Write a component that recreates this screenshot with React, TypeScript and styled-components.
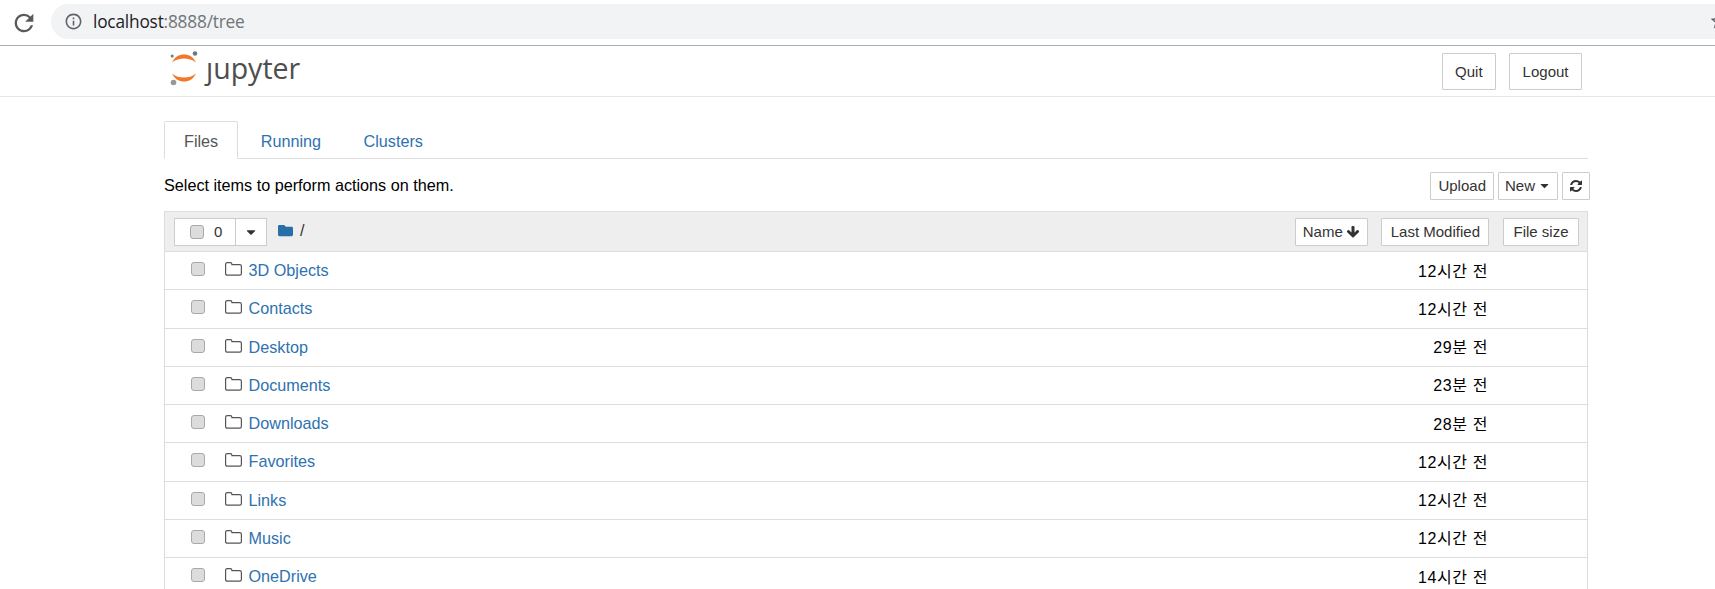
import {createGlobalStyle} from 'styled-components';
import styled from 'styled-components';
import {FaCaretDown, FaFolder} from 'react-icons/fa';
import {MdInfoOutline, MdRefresh, MdStarBorder} from 'react-icons/md';

const GlobalStyle = createGlobalStyle`
  html, body {
    margin: 0;
    padding: 0;
    height: 589px;
    overflow: hidden;
    background: #fff;
    font-family: "Liberation Sans", "Noto Sans CJK KR", Arial, sans-serif;
    font-size: 16.2px;
    color: #000;
  }
`;

const BrowserBar = styled.div`
  display: flex;
  align-items: center;
  height: 45px;
  border-bottom: 1px solid #aeaeae;
  overflow: hidden;
`;

const ReloadIcon = styled(MdRefresh)`
  width: 28px;
  height: 28px;
  margin: 0 13px 0 10px;
  color: #5a5a5a;
  flex: none;
`;

const AddressBar = styled.div`
  flex: none;
  width: 1678px;
  height: 35px;
  margin-top: -3px;
  border-radius: 18px 0 0 18px;
  background: #f1f3f4;
  display: flex;
  align-items: center;
  padding-left: 13px;
  box-sizing: border-box;
  font-size: 17.3px;
  font-family: "Open Sans", "Liberation Sans", sans-serif;
  letter-spacing: -0.2px;
  color: #202124;
  & > span {
    color: #70757a;
  }
`;

const InfoIcon = styled(MdInfoOutline)`
  width: 19px;
  height: 19px;
  margin-right: 10px;
  color: #5f6368;
`;

const StarIcon = styled(MdStarBorder)`
  width: 20px;
  height: 20px;
  margin-left: auto;
  color: #5f6368;
  flex: none;
`;

const Header = styled.div`
  display: flex;
  align-items: center;
  justify-content: space-between;
  height: 50px;
  padding: 0 133px 0 169px;
  border-bottom: 1px solid #e7e7e7;
`;

const Logo = styled.div`
  display: flex;
  align-items: center;
  gap: 7px;
  font-family: "Open Sans", "Noto Sans", sans-serif;
  font-size: 28.5px;
  line-height: 1;
  color: #4e4e4e;
  padding-bottom: 6px;
`;

const HeaderActions = styled.div`
  display: flex;
  gap: 13px;
`;

const HeaderButton = styled.button`
  height: 37px;
  padding: 0 12.5px;
  background: #fff;
  border: 1px solid #ccc;
  border-radius: 1px;
  font: inherit;
  font-size: 15px;
  color: #333;
`;

const Main = styled.div`
  width: 1424px;
  margin-left: 164px;
`;

const Tabs = styled.div`
  display: flex;
  gap: 2.5px;
  height: 62px;
  box-sizing: border-box;
  padding-top: 24px;
  border-bottom: 1px solid #ddd;
`;

const Tab = styled.div<{$active?: boolean}>`
  height: 38px;
  box-sizing: border-box;
  padding: 0 19px;
  line-height: 39px;
  color: ${(props) => (props.$active ? '#555' : '#2f72b0')};
  border: 1px solid ${(props) => (props.$active ? '#ddd' : 'transparent')};
  border-bottom-color: ${(props) => (props.$active ? '#fff' : 'transparent')};
  border-radius: 2px 2px 0 0;
  background: ${(props) => (props.$active ? '#fff' : 'transparent')};
`;

const Toolbar = styled.div`
  display: flex;
  align-items: center;
  justify-content: space-between;
  height: 51px;
  margin-right: -2px;
  padding-top: 1px;
`;

const ToolbarActions = styled.div`
  display: flex;
  align-items: center;
  gap: 4px;
`;

const SmallButton = styled.button<{$pad?: number}>`
  display: inline-flex;
  align-items: center;
  justify-content: center;
  gap: 3px;
  box-sizing: border-box;
  height: 28px;
  padding: 0 ${(props) => props.$pad ?? 7}px;
  background: #fff;
  border: 1px solid #ccc;
  border-radius: 1px;
  font: inherit;
  font-size: 15px;
  color: #333;
  & > svg {
    flex: none;
  }
`;

const List = styled.div`
  border: 1px solid #ddd;
  border-bottom: none;
`;

const ListHeader = styled.div`
  display: flex;
  align-items: center;
  height: 39px;
  padding: 0 8px 0 9px;
  background: #eee;
  border-bottom: 1px solid #ddd;
`;

const SelectGroup = styled.div`
  display: flex;
  height: 28px;
`;

const SelectCount = styled.div`
  display: flex;
  align-items: center;
  gap: 10px;
  box-sizing: border-box;
  width: 62px;
  padding-left: 15px;
  background: #fff;
  border: 1px solid #ccc;
  font-size: 15px;
  color: #333;
`;

const SelectCaret = styled.div`
  display: flex;
  align-items: center;
  justify-content: center;
  box-sizing: border-box;
  width: 32px;
  margin-left: -1px;
  background: #fff;
  border: 1px solid #ccc;
  color: #333;
`;

const PathBar = styled.div`
  flex: 1;
  display: flex;
  align-items: center;
  gap: 7px;
  margin-left: 11px;
  padding-bottom: 3px;
  color: #333;
`;

const SortButtons = styled.div`
  display: flex;
  gap: 13.5px;
`;

const Checkbox = styled.span`
  display: block;
  flex: none;
  box-sizing: border-box;
  width: 14px;
  height: 14px;
  background: #dcdcdc;
  border: 1px solid #a9a9a9;
  border-radius: 3px;
`;

const RowCheckbox = styled(Checkbox)`
  margin-top: -3px;
`;

const Row = styled.div`
  display: flex;
  align-items: center;
  height: 38.25px;
  box-sizing: border-box;
  padding: 0 99px 0 26px;
  border-bottom: 1px solid #ddd;
`;

const FolderIcon = styled.svg`
  flex: none;
  width: 17px;
  height: 14px;
  margin: -3px 7px 0 19.5px;
`;

const FileLink = styled.a`
  flex: 1;
  color: #2f72b0;
  text-decoration: none;
`;

const Modified = styled.span`
  white-space: nowrap;
  font-size: 16px;
  letter-spacing: 0.6px;
  margin-top: -2px;
`;

const LogoMark = () => (
  <svg width="30" height="36" viewBox="0 0 30 36">
    <path d="M3 12.5C6 6.5 10 4.5 15 4.5s9 2 12 8C23 9.5 19.5 8.5 15 8.5S7 9.5 3 12.5Z" fill="#f37726" />
    <path d="M3 23.5C6 29.5 10 31.5 15 31.5s9-2 12-8C23 26.5 19.5 27.5 15 27.5S7 26.5 3 23.5Z" fill="#f37726" />
    <circle cx="26" cy="3.5" r="2.3" fill="#767677" />
    <circle cx="3.2" cy="6" r="1.5" fill="#767677" />
    <circle cx="4.5" cy="32.5" r="2.8" fill="#989798" />
  </svg>
);

const OpenFolder = () => (
  <FolderIcon viewBox="0 0 17 14">
    <path
      d="M.6 11.5V2.3C.6 1.3 1.3.6 2.3.6h2.9c1 0 1.7.7 1.7 1.7v.4h7.800c1 0 1.700.7 1.700 1.700v7.100c0 1-.7 1.700-1.700 1.700H2.300c-1 0-1.700-.7-1.700-1.700Z"
      fill="none"
      stroke="#555"
      strokeWidth="1.2"
    />
  </FolderIcon>
);

// font awesome 4 glyphs, the ones in react-icons are thinner
const RefreshIcon = () => (
  <svg width="14" height="14" viewBox="0 0 1792 1792" fill="#333">
    <path d="M1639 1056q0 5-1 7-64 268-268 434.500t-478 166.500q-146 0-282.500-55t-243.500-157l-129 129q-19 19-45 19t-45-19-19-45v-448q0-26 19-45t45-19h448q26 0 45 19t19 45-19 45l-137 137q71 66 161 102t187 36q134 0 250-65t186-179q11-17 53-117 8-23 30-23h192q13 0 22.500 9.500t9.500 22.500zm25-800v448q0 26-19 45t-45 19h-448q-26 0-45-19t-19-45 19-45l138-138q-148-137-349-137-134 0-250 65t-186 179q-11 17-53 117-8 23-30 23h-199q-13 0-22.500-9.500t-9.500-22.500v-7q65-268 270-434.500t480-166.500q146 0 284 55.500t245 156.500l130-129q19-19 45-19t45 19 19 45z" />
  </svg>
);

const ArrowDownIcon = () => (
  <svg width="14" height="14" viewBox="0 0 1792 1792" fill="#333">
    <path d="M1675 832q0 53-37 90l-651 652q-39 37-91 37-53 0-90-37l-651-652q-38-36-38-90 0-53 38-91l74-75q39-37 91-37 53 0 90 37l294 294v-704q0-52 38-90t90-38h128q52 0 90 38t38 90v704l294-294q37-37 90-37 52 0 91 37l75 75q37 39 37 91z" />
  </svg>
);

const files = [
  {name: '3D Objects', modified: '12시간 전'},
  {name: 'Contacts', modified: '12시간 전'},
  {name: 'Desktop', modified: '29분 전'},
  {name: 'Documents', modified: '23분 전'},
  {name: 'Downloads', modified: '28분 전'},
  {name: 'Favorites', modified: '12시간 전'},
  {name: 'Links', modified: '12시간 전'},
  {name: 'Music', modified: '12시간 전'},
  {name: 'OneDrive', modified: '14시간 전'},
];

export default function App() {
  return (
    <>
      <GlobalStyle />
      <BrowserBar>
        <ReloadIcon />
        <AddressBar>
          <InfoIcon />
          localhost<span>:8888/tree</span>
          <StarIcon />
        </AddressBar>
      </BrowserBar>
      <Header>
        <Logo>
          <LogoMark />
          ȷupyter
        </Logo>
        <HeaderActions>
          <HeaderButton>Quit</HeaderButton>
          <HeaderButton>Logout</HeaderButton>
        </HeaderActions>
      </Header>
      <Main>
        <Tabs>
          <Tab $active>Files</Tab>
          <Tab>Running</Tab>
          <Tab>Clusters</Tab>
        </Tabs>
        <Toolbar>
          <span>Select items to perform actions on them.</span>
          <ToolbarActions>
            <SmallButton>Upload</SmallButton>
            <SmallButton $pad={6}>
              New <FaCaretDown size={13} />
            </SmallButton>
            <SmallButton $pad={6}>
              <RefreshIcon />
            </SmallButton>
          </ToolbarActions>
        </Toolbar>
        <List>
          <ListHeader>
            <SelectGroup>
              <SelectCount>
                <Checkbox />0
              </SelectCount>
              <SelectCaret>
                <FaCaretDown size={14} />
              </SelectCaret>
            </SelectGroup>
            <PathBar>
              <FaFolder size={15} color="#286ea8" />/
            </PathBar>
            <SortButtons>
              <SmallButton>
                Name <ArrowDownIcon />
              </SmallButton>
              <SmallButton $pad={8.5}>Last Modified</SmallButton>
              <SmallButton $pad={9.5}>File size</SmallButton>
            </SortButtons>
          </ListHeader>
          {files.map((file) => (
            <Row key={file.name}>
              <RowCheckbox />
              <OpenFolder />
              <FileLink href="#">{file.name}</FileLink>
              <Modified>{file.modified}</Modified>
            </Row>
          ))}
        </List>
      </Main>
    </>
  );
}
